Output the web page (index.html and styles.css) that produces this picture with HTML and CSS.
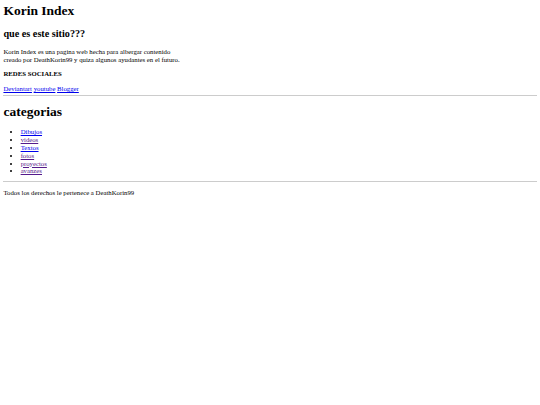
FILE: index.html
```html
<!DOCTYPE html>
<html lang="es">
<head>
<meta charset="utf-8">
<title>Korin Index</title>
<link rel="stylesheet" href="styles.css">
</head>
<body>
<h1 class="title top-title">Korin Index</h1>
<h2 class="subtitle">que es este sitio???</h2>
<p class="text">Korin Index es una pagina web hecha para albergar contenido<br>creado por DeathKorin99 y quiza algunos ayudantes en el futuro.</p>
<p class="text"><b>REDES SOCIALES</b></p>
<div class="social"><a href="#deviantart">Deviantart</a> <a href="#youtube">youtube</a> <a href="#blogger">Blogger</a></div>
<hr class="rule">
<h1 class="title cats-title">categorias</h1>
<ul class="cat-list">
<li><a href="#dibujos">Dibujos</a></li>
<li><a class="seen" href="#videos">videos</a></li>
<li><a href="#textos">Textos</a></li>
<li><a class="seen" href="#fotos">fotos</a></li>
<li><a class="seen" href="#proyectos">proyectos</a></li>
<li><a class="seen" href="#avanzes">avanzes</a></li>
</ul>
<hr class="rule">
<p class="text footer">Todos los derechos le pertenece a DeathKorin99</p>
</body>
</html>
```
FILE: styles.css
```css
html {
  background: #fff;
}
body {
  margin: 3.44px;
  font-family: "Liberation Serif", "Times New Roman", serif;
  font-size: 6.75px;
  line-height: 7.85px;
  color: #000;
}
.title {
  font-size: 13.5px;
  line-height: 15.8px;
  font-weight: bold;
  margin: 9.2px 0;
}
.top-title {
  margin-top: 0;
}
.cats-title {
  margin: 8.2px 0;
}
.subtitle {
  font-size: 10.2px;
  line-height: 11.9px;
  font-weight: bold;
  margin: 8.6px 0 7.6px;
}
.text {
  margin: 6.88px 0;
}
.footer {
  margin-top: 7px;
}
a {
  color: #0000ee;
  text-decoration: underline;
}
a.seen {
  color: #551a8b;
}
.rule {
  border: none;
  border-top: 1px solid #cccccc;
  margin: 2px 0 3px;
}
.cat-list {
  margin: 6.88px 0 5.88px;
  padding-left: 17.2px;
  list-style: disc;
}
```
